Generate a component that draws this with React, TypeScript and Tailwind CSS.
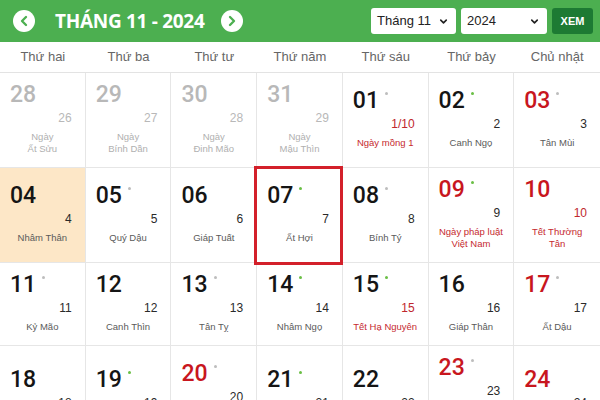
import { ChevronDown, ChevronLeft, ChevronRight } from "lucide-react";

type Cell = {
  d: string;
  lunar: string;
  label: string[];
  dim?: boolean;
  red?: boolean;
  lunarRed?: boolean;
  labelRed?: boolean;
  dot?: "gray" | "green";
  today?: boolean;
  picked?: boolean;
};

const weekdays = [
  "Thứ hai",
  "Thứ ba",
  "Thứ tư",
  "Thứ năm",
  "Thứ sáu",
  "Thứ bảy",
  "Chủ nhật",
];

const cells: Cell[] = [
  { d: "28", lunar: "26", label: ["Ngày", "Ất Sửu"], dim: true },
  { d: "29", lunar: "27", label: ["Ngày", "Bính Dần"], dim: true },
  { d: "30", lunar: "28", label: ["Ngày", "Đinh Mão"], dim: true },
  { d: "31", lunar: "29", label: ["Ngày", "Mậu Thìn"], dim: true },
  { d: "01", lunar: "1/10", label: ["Ngày mồng 1"], dot: "gray", lunarRed: true, labelRed: true },
  { d: "02", lunar: "2", label: ["Canh Ngọ"], dot: "green" },
  { d: "03", lunar: "3", label: ["Tân Mùi"], dot: "gray", red: true },

  { d: "04", lunar: "4", label: ["Nhâm Thân"], today: true },
  { d: "05", lunar: "5", label: ["Quý Dậu"], dot: "gray" },
  { d: "06", lunar: "6", label: ["Giáp Tuất"] },
  { d: "07", lunar: "7", label: ["Ất Hợi"], dot: "green", picked: true },
  { d: "08", lunar: "8", label: ["Bính Tý"], dot: "gray" },
  { d: "09", lunar: "9", label: ["Ngày pháp luật", "Việt Nam"], dot: "green", red: true, labelRed: true },
  { d: "10", lunar: "10", label: ["Tết Thường", "Tân"], red: true, lunarRed: true, labelRed: true },

  { d: "11", lunar: "11", label: ["Kỷ Mão"], dot: "gray" },
  { d: "12", lunar: "12", label: ["Canh Thìn"] },
  { d: "13", lunar: "13", label: ["Tân Tỵ"], dot: "gray" },
  { d: "14", lunar: "14", label: ["Nhâm Ngọ"], dot: "green" },
  { d: "15", lunar: "15", label: ["Tết Hạ Nguyên"], dot: "green", lunarRed: true, labelRed: true },
  { d: "16", lunar: "16", label: ["Giáp Thân"] },
  { d: "17", lunar: "17", label: ["Ất Dậu"], dot: "gray", red: true },

  { d: "18", lunar: "18", label: ["Bính Tuất"] },
  { d: "19", lunar: "19", label: ["Đinh Hợi"], dot: "green" },
  { d: "20", lunar: "20", label: ["Ngày Nhà giáo", "Việt Nam"], dot: "gray", red: true, labelRed: true },
  { d: "21", lunar: "21", label: ["Kỷ Sửu"], dot: "green" },
  { d: "22", lunar: "22", label: ["Canh Dần"] },
  { d: "23", lunar: "23", label: ["Ngày thành lập", "Hội Chữ thập đỏ", "Việt Nam"], dot: "gray", red: true, labelRed: true },
  { d: "24", lunar: "24", label: ["Nhâm Thìn"], red: true },
];

function DayCell({ c, last }: { c: Cell; last: boolean }) {
  const numColor = c.dim
    ? "text-[#b8b8b8]"
    : c.red
      ? "text-[#c8161e]"
      : "text-[#151515]";
  const lunarColor = c.dim
    ? "text-[#b8b8b8] font-normal"
    : c.lunarRed
      ? "text-[#c0272d] font-medium"
      : "text-[#2a2a2a] font-medium";
  const labelColor = c.dim
    ? "text-[#b0b0b0]"
    : c.labelRed
      ? "text-[#c62a2f] font-medium"
      : "text-[#5a5a5a]";

  return (
    <div
      className={`relative flex flex-col justify-center border-b border-[#e6e6e6] px-[10px] pt-[9px] pb-[12px] ${
        last ? "" : "border-r"
      } ${c.today ? "bg-[#fde7c7]" : "bg-white"}`}
    >
      <div className="flex h-[26px] items-start">
        <span
          className={`font-['Roboto',sans-serif] text-[23px] leading-[26px] font-medium ${numColor}`}
        >
          {c.d}
        </span>
        {c.dot ? (
          <span
            className={`ml-[6px] mt-[4px] h-[3px] w-[3px] rounded-full ${
              c.dot === "green" ? "bg-[#6abf45]" : "bg-[#bdbdbd]"
            }`}
          />
        ) : null}
      </div>
      <div
        className={`mt-[3px] pr-[3px] text-right font-['Liberation_Sans',sans-serif] text-[12px] leading-[14px] ${lunarColor}`}
      >
        {c.lunar}
      </div>
      <div
        className={`-mx-[10px] mt-[6px] whitespace-nowrap text-center font-['Liberation_Sans',sans-serif] text-[9.5px] leading-[12px] ${labelColor}`}
      >
        {c.label.map((l) => (
          <div key={l}>{l}</div>
        ))}
      </div>
      {c.picked ? (
        <div className="absolute -left-[3px] -right-[1px] -top-[2px] -bottom-[3px] z-10 border-[3px] border-[#d3202a]" />
      ) : null}
    </div>
  );
}

export default function App() {
  return (
    <main className="h-[400px] w-[600px] overflow-hidden bg-white">
      <div className="flex h-[42px] items-center bg-[#4caf50]">
        <button
          type="button"
          className="ml-[13px] flex h-[22px] w-[22px] items-center justify-center rounded-full bg-white text-[#4caf50]"
        >
          <ChevronLeft size={16} strokeWidth={3.5} />
        </button>
        <h1 className="ml-[20px] font-['Open_Sans',sans-serif] text-[19px] font-bold tracking-[-0.3px] text-white">
          THÁNG 11 - 2024
        </h1>
        <button
          type="button"
          className="ml-[17px] flex h-[22px] w-[22px] items-center justify-center rounded-full bg-white text-[#4caf50]"
        >
          <ChevronRight size={16} strokeWidth={3.5} />
        </button>

        <div className="ml-auto mr-[7px] flex items-center gap-[5px] font-['Liberation_Sans',sans-serif]">
          <div className="flex h-[26px] w-[85px] items-center justify-between rounded-[3px] bg-white pl-[6px] pr-[7px] text-[13px] text-[#222]">
            <span>Tháng 11</span>
            <ChevronDown size={11} strokeWidth={3.5} />
          </div>
          <div className="flex h-[26px] w-[86px] items-center justify-between rounded-[3px] bg-white pl-[6px] pr-[7px] text-[13px] text-[#222]">
            <span>2024</span>
            <ChevronDown size={11} strokeWidth={3.5} />
          </div>
          <button
            type="button"
            className="h-[26px] w-[41px] rounded-[3px] bg-[#1d7a33] text-[11px] font-bold text-white"
          >
            XEM
          </button>
        </div>
      </div>

      <div className="grid h-[31px] grid-cols-7 border-b border-[#e3e3e3] font-['Liberation_Sans',sans-serif]">
        {weekdays.map((w) => (
          <div
            key={w}
            className="flex items-center justify-center text-[13px] text-[#666]"
          >
            {w}
          </div>
        ))}
      </div>

      <div className="grid grid-cols-7">
        {cells.map((c, i) => (
          <DayCell key={c.d + i} c={c} last={i % 7 === 6} />
        ))}
      </div>
    </main>
  );
}
